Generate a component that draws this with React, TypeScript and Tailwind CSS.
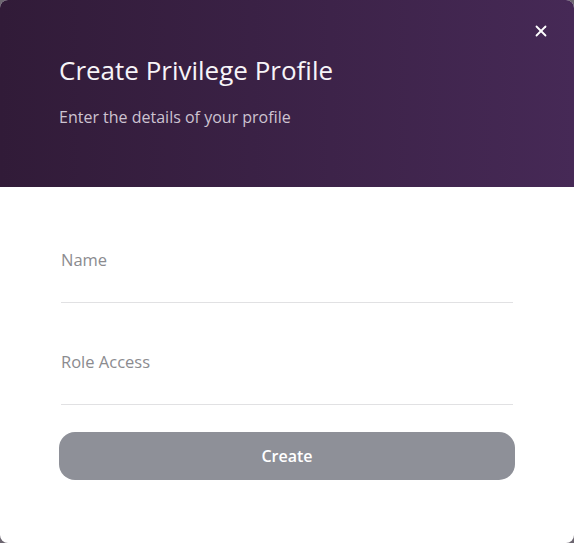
import React from 'react';
import { X } from 'lucide-react';

const font = { fontFamily: '"Open Sans", "Noto Sans", sans-serif' };

const Field = ({ label, top }: { label: string; top: string }) => (
  <div className={top}>
    <label className="block text-[16.5px] leading-5 text-[#8b8b8f]">{label}</label>
    <div className="mt-[32px] border-b border-[#e1e1e3]" />
  </div>
);

export default function App() {
  return (
    <div className="w-[574px] h-[543px] bg-[#6c6670]" style={font}>
      <div className="flex h-full flex-col overflow-hidden rounded-lg bg-white">
        <div className="relative h-[187px] shrink-0 bg-gradient-to-r from-[#311b38] to-[#462956] px-[59px] pt-[54px]">
          <button className="absolute right-[24px] top-[22px] text-white">
            <X className="h-[18px] w-[18px]" strokeWidth={2.4} />
          </button>
          <h2 className="text-[26px] leading-8 font-normal text-[#f7f4f8]">Create Privilege Profile</h2>
          <p className="mt-[21px] text-[16px] leading-5 text-[#cdc3d1]">Enter the details of your profile</p>
        </div>
        <div className="flex flex-col px-[61px]">
          <Field label="Name" top="pt-[63px]" />
          <Field label="Role Access" top="pt-[49px]" />
          <button className="-mx-[2px] mt-[27px] h-[48px] rounded-2xl bg-[#8e9098] text-[16px] font-semibold leading-none text-white">
            Create
          </button>
        </div>
      </div>
    </div>
  );
}
